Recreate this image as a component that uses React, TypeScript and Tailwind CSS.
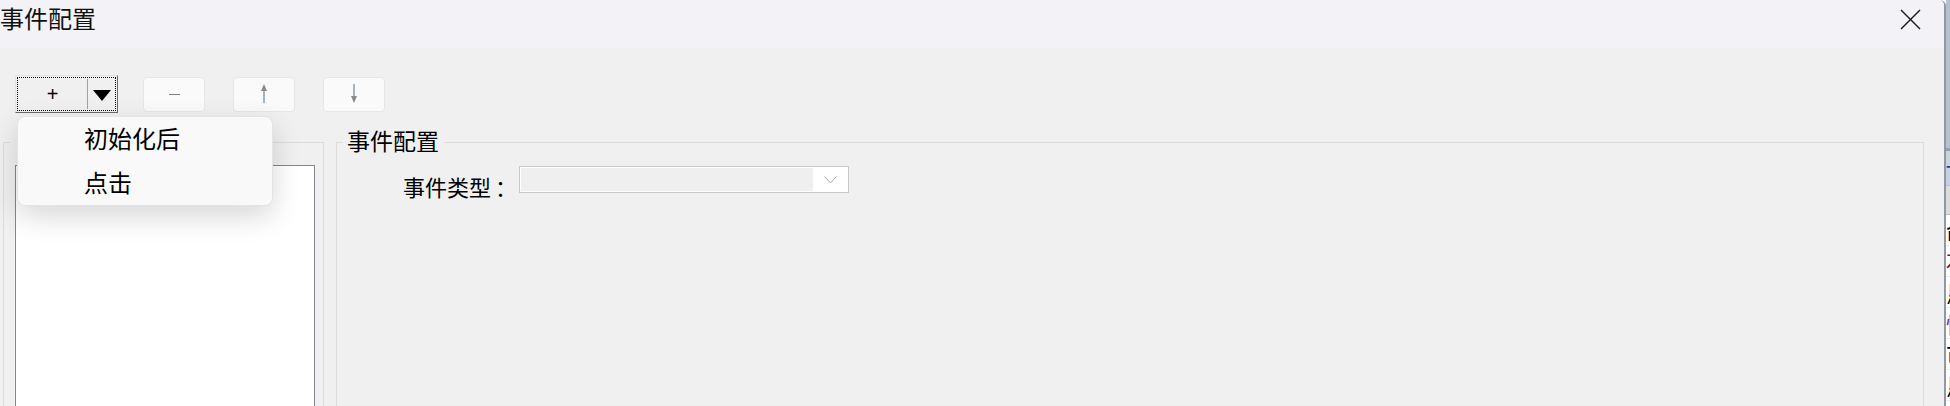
const cjk = "font-['Noto_Sans_CJK_SC','Noto_Sans_CJK_JP',sans-serif]";

function ArrowUp() {
  return (
    <svg width="10" height="20" viewBox="0 0 10 20">
      <line x1="5" y1="5" x2="5" y2="19" stroke="#8da2b8" strokeWidth="1.6" />
      <polygon points="5,0 8,7 2,7" fill="#8a8a8a" />
    </svg>
  );
}

function ArrowDown() {
  return (
    <svg width="10" height="20" viewBox="0 0 10 20">
      <line x1="5" y1="0" x2="5" y2="14" stroke="#8da2b8" strokeWidth="1.6" />
      <polygon points="5,19 8,12 2,12" fill="#8a8a8a" />
    </svg>
  );
}

function ToolButton({ children }: { children: React.ReactNode }) {
  return (
    <div className="flex h-[35px] w-[62px] items-center justify-center rounded-[4px] border border-[#e6e6e6] bg-[#fafafa]">
      {children}
    </div>
  );
}

function SplitButton() {
  return (
    <div className="h-[38px] w-[103px] border border-t-[#e3e3e3] border-l-[#e3e3e3] border-b-[#696969] border-r-[#696969] bg-[#f0f0f0] p-[1px]">
      <div className="flex h-full w-full border border-dotted border-black">
        <div className="flex w-[69px] items-center justify-center pb-[1px] font-['Liberation_Sans',sans-serif] text-[20px] leading-none text-black">
          +
        </div>
        <div className="my-[1px] w-px bg-[#a0a0a0]" />
        <div className="flex flex-1 items-center justify-center pt-[2px]">
          <svg width="18" height="11" viewBox="0 0 18 11">
            <polygon points="0,0 18,0 9,11" fill="#000" />
          </svg>
        </div>
      </div>
    </div>
  );
}

function EventCombo() {
  return (
    <div className="flex h-[27px] w-[330px] border border-[#c8c8c8] bg-white p-[1px]">
      <div className="flex-1 bg-[#efefef]" />
      <div className="flex w-[34px] items-center justify-center">
        <svg width="13" height="8" viewBox="0 0 13 8">
          <polyline points="0.5,0.5 6.5,7 12.5,0.5" fill="none" stroke="#a8a8a8" strokeWidth="1" />
        </svg>
      </div>
    </div>
  );
}

const stripRows = [
  { t: "命", c: "text-black" },
  { t: "石", c: "text-[#7a1010]" },
  { t: "恳", c: "text-black" },
  { t: "快", c: "text-[#5a1a7a]" },
  { t: "可", c: "text-black" },
  { t: "恳", c: "text-black" },
];

function BackgroundStrip() {
  return (
    <div className="flex w-[4px] flex-col overflow-hidden bg-white">
      <div className="h-[148px] bg-[#b3c1d1]" />
      <div className="h-[3px] bg-[#8ea0b6]" />
      <div className="h-[8px] bg-[#c9d3df]" />
      <div className={`h-[26px] overflow-hidden bg-[#c4d2e6] text-[22px] leading-[26px] text-[#1f3f8f] ${cjk}`}>
        T
      </div>
      <div className="h-[30px] border-y border-[#c0c0c0] bg-[#dcdcdc]" />
      {stripRows.map((r, i) => (
        <div
          key={i}
          className={`h-[31px] overflow-hidden whitespace-nowrap border-b border-[#ececec] text-[22px] leading-[31px] ${r.c} ${cjk}`}
        >
          {r.t}
        </div>
      ))}
    </div>
  );
}

export default function App() {
  return (
    <div className="flex h-[406px] w-[1950px] overflow-hidden bg-white">
      <div className="flex w-[1946px] flex-col overflow-hidden rounded-tr-[6px] border-r-2 border-[#8f99a4]">
        {/* title bar */}
        <div className="flex h-[48px] shrink-0 items-start justify-between bg-[#f3f3f7]">
          <div className={`mt-[6px] text-[24px] leading-none text-[#111] ${cjk}`}>事件配置</div>
          <div className="mr-[23px] mt-[9px]">
            <svg width="21" height="21" viewBox="0 0 21 21">
              <line x1="1" y1="1" x2="20" y2="20" stroke="#1a1a1a" strokeWidth="1.5" />
              <line x1="20" y1="1" x2="1" y2="20" stroke="#1a1a1a" strokeWidth="1.5" />
            </svg>
          </div>
        </div>

        {/* body */}
        <div className="relative flex flex-1 flex-col bg-[#f0f0f0]">
          <div className="ml-[15px] mt-[27px] flex items-center">
            <SplitButton />
            <div className="ml-[25px]">
              <ToolButton>
                <div className="h-px w-[11px] bg-[#808080]" />
              </ToolButton>
            </div>
            <div className="ml-[28px]">
              <ToolButton>
                <ArrowUp />
              </ToolButton>
            </div>
            <div className="ml-[28px]">
              <ToolButton>
                <ArrowDown />
              </ToolButton>
            </div>
          </div>

          <div className="mt-[29px] flex gap-[12px] pl-[3px] pr-[20px]">
            {/* left group, its caption sits under the open menu */}
            <div className="relative h-[300px] w-[321px] shrink-0 border border-[#dcdcdc] pl-[11px] pt-[22px]">
              <span className="absolute -top-[2px] left-[6px] h-[3px] w-[10px] bg-[#f0f0f0]" />
              <div className="h-[260px] w-[300px] border border-[#828790] bg-white" />
            </div>

            {/* right group */}
            <div className="relative h-[300px] flex-1 border border-[#dcdcdc] pt-[23px]">
              <span className={`absolute -top-[14px] left-[5px] bg-[#f0f0f0] px-[5px] text-[23px] leading-none text-black ${cjk}`}>
                事件配置
              </span>
              <div className="flex items-start pl-[66px]">
                <span className={`mt-[9px] text-[22px] leading-none text-black ${cjk}`}>
                  事件类型<span className="ml-[4px]">：</span>
                </span>
                <div className="ml-[2px]">
                  <EventCombo />
                </div>
              </div>
            </div>
          </div>

          {/* dropdown menu of the add button */}
          <div className="absolute left-[17px] top-[68px] w-[256px] rounded-[8px] border border-[#e4e4e4] bg-[#f9f9f9] pb-[1px] shadow-[0_10px_28px_rgba(0,0,0,0.16)]">
            <div className={`pl-[66px] text-[24px] leading-[42px] text-black ${cjk}`}>初始化后</div>
            <div className={`pl-[66px] text-[24px] leading-[45px] text-black ${cjk}`}>点击</div>
          </div>
        </div>
      </div>
      <BackgroundStrip />
    </div>
  );
}
